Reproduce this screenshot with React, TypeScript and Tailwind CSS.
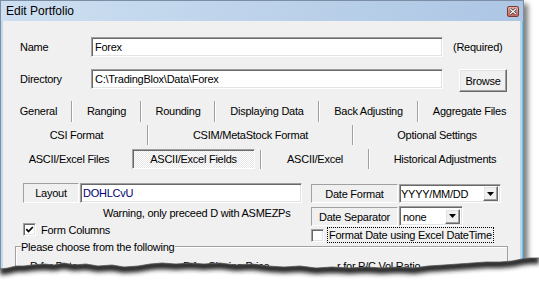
import React from "react";

const sunken =
  "bg-white border border-t-[#a0a0a0] border-l-[#a0a0a0] border-b-white border-r-white shadow-[inset_1px_1px_0_#696969,inset_-1px_-1px_0_#e3e3e3]";
const raised =
  "bg-[#f0f0f0] border border-t-white border-l-white border-b-[#696969] border-r-[#696969] shadow-[inset_-1px_-1px_0_#a0a0a0,inset_1px_1px_0_#e3e3e3]";
const staticBox =
  "border border-t-[#a0a0a0] border-l-[#a0a0a0] border-b-white border-r-white flex items-center justify-center";

function Sep({ className = "" }: { className?: string }) {
  return <div className={"w-[2px] shrink-0 border-l border-l-[#a0a0a0] border-r border-r-white " + className} />;
}

function Cell({ w, children }: { w: string; children: React.ReactNode }) {
  return <div className={"shrink-0 flex items-center justify-center whitespace-nowrap " + w}>{children}</div>;
}

function DropBtn() {
  return (
    <div className={"w-[15px] h-[15px] shrink-0 flex items-center justify-center " + raised}>
      <svg width="7" height="4" viewBox="0 0 7 4">
        <path d="M0 0 H7 L3.5 4 Z" fill="#000" />
      </svg>
    </div>
  );
}

function CheckBox({ checked }: { checked?: boolean }) {
  return (
    <div className={"w-[13px] h-[13px] shrink-0 flex items-center justify-center " + sunken}>
      {checked && (
        <svg width="9" height="9" viewBox="0 0 9 9">
          <path d="M1.3 4.2 L3.5 6.5 L7.8 2" stroke="#000" strokeWidth="1.7" fill="none" />
        </svg>
      )}
    </div>
  );
}

const edge: [number, number][] = [
  [0, 269], [8, 268], [16, 266], [24, 266], [32, 265], [44, 264], [54, 265], [64, 263], [74, 265],
  [86, 264], [98, 266], [112, 265], [124, 267], [138, 266], [150, 264], [162, 263], [176, 264],
  [190, 263], [204, 264], [220, 263], [236, 265], [252, 264], [268, 266], [284, 267], [300, 266],
  [316, 268], [332, 267], [350, 268], [366, 267], [382, 268], [398, 267], [414, 268], [428, 266],
  [444, 265], [458, 264], [472, 263], [486, 262], [500, 262], [512, 261], [522, 259], [530, 258],
  [539, 258],
];

export default function App() {
  const d = "M" + edge.map((p) => p.join(" ")).join(" L");
  const fill = d + " L539 288 L0 288 Z";
  return (
    <div className="relative w-[539px] h-[288px] bg-white overflow-hidden font-['Liberation_Sans',Arial,sans-serif] text-black">
      <div className="w-[524px] h-[300px] border border-[#7b8ea6] shadow-[4px_4px_5px_rgba(0,0,0,0.5)] flex flex-col">
        {/* Title bar */}
        <div className="h-[20px] shrink-0 flex items-center justify-between pl-[5px] pr-[4px] bg-gradient-to-r from-[#cddff1] to-[#adc6e4]">
          <span className="text-[12px] leading-[14px]">Edit Portfolio</span>
          <div className="w-[12px] h-[11px] rounded-[2px] border border-[#7a3b36] bg-gradient-to-b from-[#eab0a4] to-[#c8645a] flex items-center justify-center">
            <svg width="8" height="7" viewBox="0 0 8 7">
              <path d="M1 1 L7 6 M7 1 L1 6" stroke="#2a2a2a" strokeWidth="2.6" />
              <path d="M1 1 L7 6 M7 1 L1 6" stroke="#fff" strokeWidth="1.3" />
            </svg>
          </div>
        </div>
        {/* Body */}
        <div className="flex flex-1">
          <div className="w-[2px] bg-[#c4d8ee]" />
          <div className="flex-1 bg-[#f0f0f0] text-[11px] tracking-[-0.25px] leading-[12px] flex flex-col">
            {/* Name row */}
            <div className="flex items-center h-[20px] mt-[16px] pl-[17px]">
              <div className="w-[71px]">Name</div>
              <div className={"w-[352px] h-[20px] flex items-center pl-[3px] " + sunken}>Forex</div>
              <div className="ml-[10px]">(Required)</div>
            </div>
            {/* Directory row */}
            <div className="flex items-start h-[23px] mt-[12px] pl-[17px]">
              <div className="w-[71px] h-[20px] flex items-center">Directory</div>
              <div className={"w-[352px] h-[20px] flex items-center pl-[3px] " + sunken}>C:\TradingBlox\Data\Forex</div>
              <div className={"ml-[16px] w-[48px] h-[23px] flex items-center justify-center " + raised}>Browse</div>
            </div>
            {/* Tabs row 1 */}
            <div className="flex h-[22px] mt-[8px] pl-[3px]">
              <Cell w="w-[65px]">General</Cell>
              <Sep className="mt-[1px]" />
              <Cell w="w-[67px]">Ranging</Cell>
              <Sep className="mt-[1px]" />
              <Cell w="w-[72px]">Rounding</Cell>
              <Sep className="mt-[1px]" />
              <Cell w="w-[102px]">Displaying Data</Cell>
              <Sep className="mt-[1px]" />
              <Cell w="w-[97px]">Back Adjusting</Cell>
              <Sep className="mt-[1px]" />
              <Cell w="w-[101px]">Aggregate Files</Cell>
            </div>
            {/* Tabs row 2 */}
            <div className="flex h-[20px] mt-[3px] pl-[3px]">
              <Cell w="w-[141px]">CSI Format</Cell>
              <Sep />
              <Cell w="w-[203px]">CSIM/MetaStock Format</Cell>
              <Sep />
              <Cell w="w-[166px]">Optional Settings</Cell>
            </div>
            {/* Tabs row 3 */}
            <div className="flex h-[20px] mt-[4px] pl-[3px]">
              <Cell w="w-[126px]">ASCII/Excel Files</Cell>
              <div className="w-[123px] h-[20px] shrink-0 border border-t-[#a0a0a0] border-l-[#a0a0a0] border-b-white border-r-white shadow-[inset_1px_1px_0_#696969] bg-[image:repeating-conic-gradient(#ffffff_0%_25%,#e6e6e6_0%_50%)] bg-[length:2px_2px] flex items-center justify-center whitespace-nowrap">
                ASCII/Excel Fields
              </div>
              <div className="w-[5px] shrink-0" />
              <Sep className="mt-[1px]" />
              <Cell w="w-[106px]">ASCII/Excel</Cell>
              <Sep />
              <Cell w="w-[150px]">Historical Adjustments</Cell>
            </div>
            {/* Lower section */}
            <div className="flex h-[57px] mt-[14px] pl-[20px]">
              <div className="w-[279px] flex flex-col">
                <div className="flex h-[20px]">
                  <div className={"w-[56px] h-[20px] " + staticBox}>Layout</div>
                  <div className={"ml-[1px] w-[222px] h-[20px] flex items-center pl-[2px] text-[#000070] " + sunken}>DOHLCvU</div>
                </div>
                <div className="mt-[4px] h-[12px] pl-[80px] whitespace-nowrap">Warning, only preceed D with ASMEZPs</div>
                <div className="mt-[4px] h-[13px] flex items-center">
                  <CheckBox checked />
                  <span className="ml-[5px]">Form Columns</span>
                </div>
              </div>
              <div className="ml-[9px] flex flex-col">
                <div className="flex mt-[1px] h-[19px]">
                  <div className={"w-[87px] h-[19px] " + staticBox}>Date Format</div>
                  <div className={"ml-[1px] w-[102px] h-[19px] flex items-center justify-between pl-[1px] pr-[2px] " + sunken}>
                    <span>YYYY/MM/DD</span>
                    <DropBtn />
                  </div>
                </div>
                <div className="flex mt-[3px] h-[20px]">
                  <div className={"w-[87px] h-[19px] mt-[1px] " + staticBox}>Date Separator</div>
                  <div className={"ml-[1px] w-[64px] h-[20px] flex items-center justify-between pl-[3px] pr-[2px] " + sunken}>
                    <span className="mt-[2px]">none</span>
                    <DropBtn />
                  </div>
                </div>
                <div className="flex items-center mt-[1px] h-[17px]">
                  <CheckBox />
                  <span className="ml-[3px] h-[16px] px-[1px] flex items-center border border-dotted border-black whitespace-nowrap">
                    Format Date using Excel DateTime
                  </span>
                </div>
              </div>
            </div>
            {/* Group box */}
            <div className="ml-[12px] mt-[6px] w-[493px] h-[60px] border-t border-l border-r border-[#a0a0a0] shadow-[inset_1px_1px_0_#ffffff]">
              <div className="-mt-[6px] ml-[5px] w-fit bg-[#f0f0f0] pr-[1px] leading-[12px] whitespace-nowrap">
                Please choose from the following
              </div>
              <div className="flex mt-[7px] pl-[14px] whitespace-nowrap">
                <div className="w-[153px]">D for Date</div>
                <div className="w-[154px]">B for Closing Price</div>
                <div>r for P/C Vol Ratio</div>
              </div>
            </div>
          </div>
          <div className="w-[3px] bg-[#b9d6ee] border-r border-r-[#5fc3ea]" />
        </div>
      </div>
      {/* Torn paper edge */}
      <svg className="absolute left-0 top-0 pointer-events-none" width={539} height={288}>
        <defs>
          <clipPath id="below">
            <path d={fill} />
          </clipPath>
          <filter id="blur" x="-5%" y="-100%" width="110%" height="300%">
            <feGaussianBlur stdDeviation="2" />
          </filter>
        </defs>
        <path d={fill} fill="#ffffff" />
        <g clipPath="url(#below)">
          <path d={d} stroke="#262626" strokeWidth={8} fill="none" filter="url(#blur)" transform="translate(0,2)" />
        </g>
        <path d={d} stroke="#444" strokeWidth={1} fill="none" opacity={0.7} />
      </svg>
    </div>
  );
}
